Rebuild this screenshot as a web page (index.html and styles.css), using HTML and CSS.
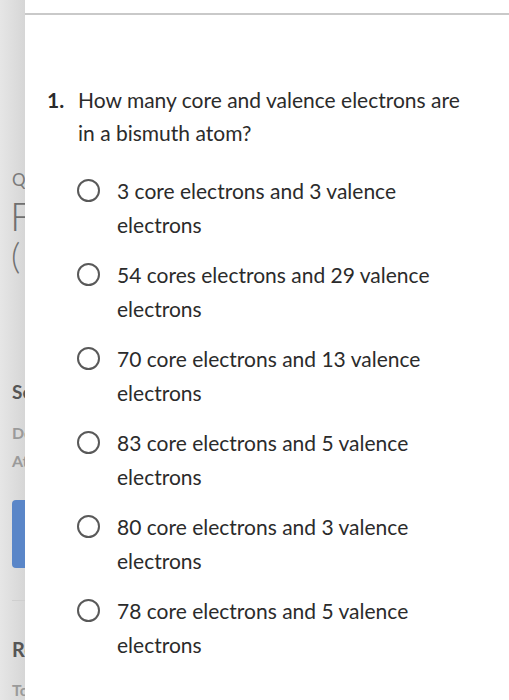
FILE: index.html
```html
<!DOCTYPE html>
<html>
<head>
<meta charset="utf-8">
<link rel="stylesheet" href="styles.css">
</head>
<body>
<div class="page">
  <aside class="sidebar">
    <div class="sb-q">Q</div>
    <div class="sb-f">F</div>
    <div class="sb-paren">(</div>
    <div class="sb-s">Se</div>
    <div class="sb-d">De</div>
    <div class="sb-a">At</div>
    <div class="sb-btn"></div>
    <div class="sb-rule"></div>
    <div class="sb-r">Re</div>
    <div class="sb-t">To</div>
  </aside>
  <main class="main">
    <div class="topline"></div>
    <div class="question">
      <span class="num">1.</span>
      <span class="qtext">How many core and valence electrons are in a bismuth atom?</span>
    </div>
    <ul class="options">
      <li class="option"><span class="radio"></span><span class="otext">3 core electrons and 3 valence electrons</span></li>
      <li class="option"><span class="radio"></span><span class="otext">54 cores electrons and 29 valence electrons</span></li>
      <li class="option"><span class="radio"></span><span class="otext">70 core electrons and 13 valence electrons</span></li>
      <li class="option"><span class="radio"></span><span class="otext">83 core electrons and 5 valence electrons</span></li>
      <li class="option"><span class="radio"></span><span class="otext">80 core electrons and 3 valence electrons</span></li>
      <li class="option"><span class="radio"></span><span class="otext">78 core electrons and 5 valence electrons</span></li>
    </ul>
  </main>
</div>
</body>
</html>
```
FILE: styles.css
```css
html, body {
  margin: 0;
  padding: 0;
  background: #ffffff;
}
body {
  font-family: "Lato", "Open Sans", sans-serif;
  color: #2b2b2b;
}
.page {
  display: flex;
  width: 509px;
  height: 700px;
  overflow: hidden;
}
.sidebar {
  width: 25px;
  flex: 0 0 25px;
  height: 700px;
  overflow: hidden;
  background: linear-gradient(to right, #e6e6e6, #d6d6d6);
  display: flex;
  flex-direction: column;
  padding-left: 12px;
  box-sizing: border-box;
  white-space: nowrap;
}
.sb-q { margin-top: 170px; font-size: 17px; color: #7a7a7a; line-height: 20px; }
.sb-f { margin-top: 8px; font-size: 40px; color: #707070; font-weight: 300; line-height: 36px; margin-left: -2px; }
.sb-paren { margin-top: 2px; font-size: 36px; color: #707070; font-weight: 300; line-height: 38px; margin-left: -1px; }
.sb-s { margin-top: 107px; font-size: 19px; color: #555; font-weight: 700; line-height: 22px; }
.sb-d { margin-top: 20px; font-size: 16px; color: #9a9a9a; font-weight: 700; line-height: 20px; }
.sb-a { margin-top: 8px; font-size: 16px; color: #9a9a9a; font-weight: 700; line-height: 20px; }
.sb-btn { margin-top: 29px; width: 20px; height: 68px; background: #5a86c8; border-radius: 4px; flex: 0 0 68px; }
.sb-rule { margin-top: 32px; height: 1px; background: #cfcfcf; flex: 0 0 1px; }
.sb-r { margin-top: 37px; font-size: 20px; color: #555; font-weight: 700; line-height: 22px; }
.sb-t { margin-top: 20px; font-size: 16px; color: #9a9a9a; font-weight: 700; line-height: 20px; }

.main {
  flex: 1;
  display: flex;
  flex-direction: column;
}
.topline {
  margin-top: 13px;
  height: 2px;
  background: #c9c9c9;
}
.question {
  display: flex;
  margin-top: 68px;
  padding-left: 22px;
  padding-right: 30px;
  font-size: 21px;
  line-height: 33px;
}
.num {
  font-weight: 700;
  width: 31px;
  flex: 0 0 31px;
}
.qtext {
  flex: 0 0 395px;
}
.options {
  list-style: none;
  margin: 25px 0 0 0;
  padding: 0 60px 0 52px;
  display: flex;
  flex-direction: column;
  gap: 16px;
}
.option {
  display: flex;
  align-items: flex-start;
  font-size: 21px;
  line-height: 34px;
}
.radio {
  width: 19px;
  height: 19px;
  border: 2.5px solid #595959;
  border-radius: 50%;
  flex: 0 0 auto;
  margin-top: 5px;
  margin-right: 17px;
}
.otext {
  flex: 1;
}
```
